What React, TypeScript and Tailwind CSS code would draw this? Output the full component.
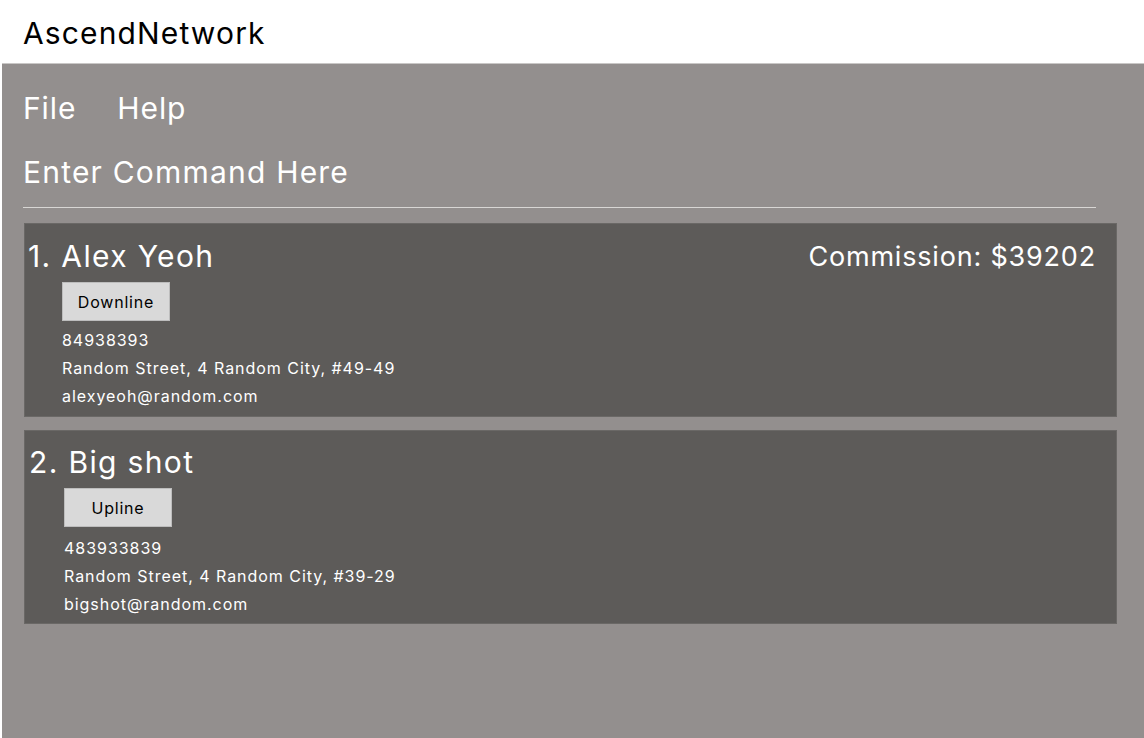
import React from 'react';

type Person = {
  name: string;
  tag: string;
  phone: string;
  address: string;
  email: string;
  commission?: string;
  shift?: boolean;
};

const PEOPLE: Person[] = [
  {
    name: 'Alex Yeoh',
    tag: 'Downline',
    phone: '84938393',
    address: 'Random Street, 4 Random City, #49-49',
    email: 'alexyeoh@random.com',
    commission: '$39202',
  },
  {
    name: 'Big shot',
    tag: 'Upline',
    phone: '483933839',
    address: 'Random Street, 4 Random City, #39-29',
    email: 'bigshot@random.com',
    shift: true,
  },
];

const PersonCard: React.FC<{ person: Person; index: number }> = ({ person, index }) => (
  <div className={`bg-[#5d5b59] border border-[#6a6866] pt-[13px] pr-[20px] ${person.shift ? 'pb-[5px]' : 'pb-[6px]'}`}>
    <div className={`flex items-center justify-between ${person.shift ? 'pl-[4px]' : 'pl-[3px]'}`}>
      <h2 className="text-[30px] leading-[36px] tracking-[0.045em] text-white">
        {index + 1}. {person.name}
      </h2>
      {person.commission && (
        <p className="text-[27px] leading-[36px] tracking-[0.03em] text-white mt-[2px]">
          Commission: {person.commission}
        </p>
      )}
    </div>
    <div className={person.shift ? 'pl-[39px]' : 'pl-[37px]'}>
      <div
        className={`${person.shift ? 'mt-[8px]' : 'mt-[7px]'} w-[108px] h-[39px] bg-[#d9d9d9] border border-[#bdbdbd] flex items-center justify-center text-[16px] tracking-[0.05em] text-black`}
      >
        {person.tag}
      </div>
      <div className={`${person.shift ? 'mt-[7px]' : 'mt-[5px]'} text-[16px] leading-[28px] tracking-[0.06em] text-white`}>
        <p>{person.phone}</p>
        <p>{person.address}</p>
        <p>{person.email}</p>
      </div>
    </div>
  </div>
);

const App: React.FC = () => {
  return (
    <div className="w-[1144px] h-[738px] bg-white flex flex-col font-['Inter',sans-serif] overflow-hidden">
      <header className="h-[63px] shrink-0 px-[23px] pt-[3px] flex items-center">
        <h1 className="text-[30px] tracking-[0.038em] text-black">AscendNetwork</h1>
      </header>

      <main className="flex-1 ml-[2px] bg-[#938f8e] border-t border-[#c9c7c6] pl-[21px] pr-[27px]">
        <nav className="flex gap-[41px] pt-[26px] text-[30px] leading-[36px] tracking-[0.03em] text-white">
          <span>File</span>
          <span>Help</span>
        </nav>

        <div className="mt-[28px] mr-[21px] border-b border-[#d8d6d4] pb-[17px]">
          <p className="text-[30px] leading-[36px] tracking-[0.04em] text-white">Enter Command Here</p>
        </div>

        <div className="mt-[15px] pl-[1px] flex flex-col gap-[13px]">
          {PEOPLE.map((p, i) => (
            <PersonCard key={p.name} person={p} index={i} />
          ))}
        </div>
      </main>
    </div>
  );
};

export default App;
